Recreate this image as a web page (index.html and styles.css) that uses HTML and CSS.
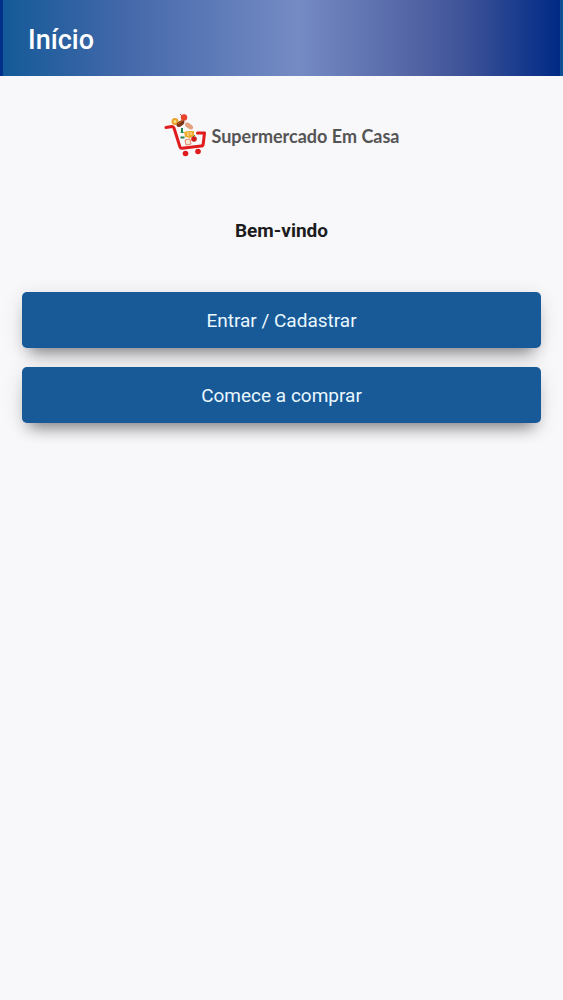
FILE: index.html
```html
<!DOCTYPE html>
<html lang="pt-BR">
<head>
  <meta charset="UTF-8" />
  <meta name="viewport" content="width=device-width, initial-scale=1.0"/>
  <title>Supermercado Em Casa</title>
  <link rel="stylesheet" href="styles.css">
</head>
<body>
  <header class="toolbar">
    <h1>Início</h1>
  </header>

  <main class="content">
    <div class="logo">
      <svg class="logo-cart" viewBox="0 0 42 46" aria-hidden="true">
        <!-- alimentos -->
        <circle cx="11" cy="9.500" r="3.500" fill="#e9a32a"/>
        <circle cx="11" cy="9.500" r="1.500" fill="#f8dc8a"/>
        <path d="M16 2l2 2 3-1-1 2" stroke="#c9502e" stroke-width="1" fill="none"/>
        <circle cx="20" cy="5.500" r="3.200" fill="#e8452c"/>
        <ellipse cx="16.500" cy="11.500" rx="4.500" ry="2.500" fill="#7c3516" transform="rotate(-38 16.500 11.500)"/>
        <path d="M14 12l5-4" stroke="#d8661f" stroke-width="1"/>
        <ellipse cx="25" cy="14" rx="4.500" ry="2.500" fill="#e3a27c" transform="rotate(32 25 14)"/>
        <path d="M18 16v4M16.500 25.500h4" stroke="#24834e" stroke-width="2"/>
        <path d="M16.500 20h4v1h-4z" fill="#3b9b62"/>
        <path d="M20 20l4-1 6 0 0 5-4 2-5-1z" fill="#f0ad32"/>
        <path d="M24 20v4M27 20v3" stroke="#fae3a0" stroke-width="1"/>
        <path d="M21 28l5-1 1 5-5 1z" fill="#fbe7d3" stroke="#dd8b68" stroke-width="1"/>
        <circle cx="30" cy="27" r="2.800" fill="#d21f1b"/>
        <path d="M29 25l2-2" stroke="#3f8438" stroke-width="1"/>
        <!-- carrinho -->
        <path d="M2 15.500l6-1q1.500 0 2 1.500l6 19q.5 1.500 2 1.300l19-2.300q2 0 2.200-2l1.300-11h-7" fill="none" stroke="#e01b1e" stroke-width="3" stroke-linecap="round" stroke-linejoin="round"/>
        <circle cx="21.500" cy="41.500" r="2.800" fill="#e01b1e"/>
        <circle cx="34" cy="39.500" r="2.800" fill="#e01b1e"/>
      </svg>
      <span class="logo-name">Supermercado Em Casa</span>
    </div>

    <h2>Bem-vindo</h2>

    <div class="actions">
      <button type="button" class="btn">Entrar / Cadastrar</button>
      <button type="button" class="btn">Comece a comprar</button>
    </div>
  </main>
</body>
</html>
```
FILE: styles.css
```css
* {
  margin: 0;
  padding: 0;
  box-sizing: border-box;
  font-family: Roboto, sans-serif;
}

body {
  background-color: #f8f7fa;
  color: #1c1c1c;
}

.toolbar {
  display: flex;
  align-items: center;
  height: 76px;
  padding: 4px 25px 0;
  border-left: 3px solid #00308a;
  border-right: 3px solid #0e5095;
  background: linear-gradient(to right, #145a98, #4468aa 22%, #758bc4 53%, #5162a3 75%, #3a5096 84%, #002a86);
  color: #fff;
}

h1 {
  font-size: 27px;
  font-weight: 500;
}

.content {
  padding: 36px 22px;
}

.logo {
  display: flex;
  justify-content: center;
  align-items: center;
  gap: 6px;
}

.logo-cart {
  width: 42px;
  height: 46px;
}

.logo-name {
  padding-top: 2px;
  font-family: Lato, Roboto, sans-serif;
  font-size: 18px;
  line-height: 24px;
  font-weight: bold;
  color: #555;
}

h2 {
  margin: 61px 0 49px;
  font-size: 19px;
  line-height: 24px;
  font-weight: bold;
  text-align: center;
}

.actions {
  display: flex;
  flex-direction: column;
  gap: 19px;
}

.btn {
  height: 56px;
  border: none;
  border-radius: 5px;
  background-color: #185998;
  color: #e9f8ff;
  font-size: 19px;
  cursor: pointer;
  box-shadow: 0 12px 16px -8px rgba(0, 0, 0, 0.45), 0 4px 20px rgba(0, 0, 0, 0.12);
}
```
